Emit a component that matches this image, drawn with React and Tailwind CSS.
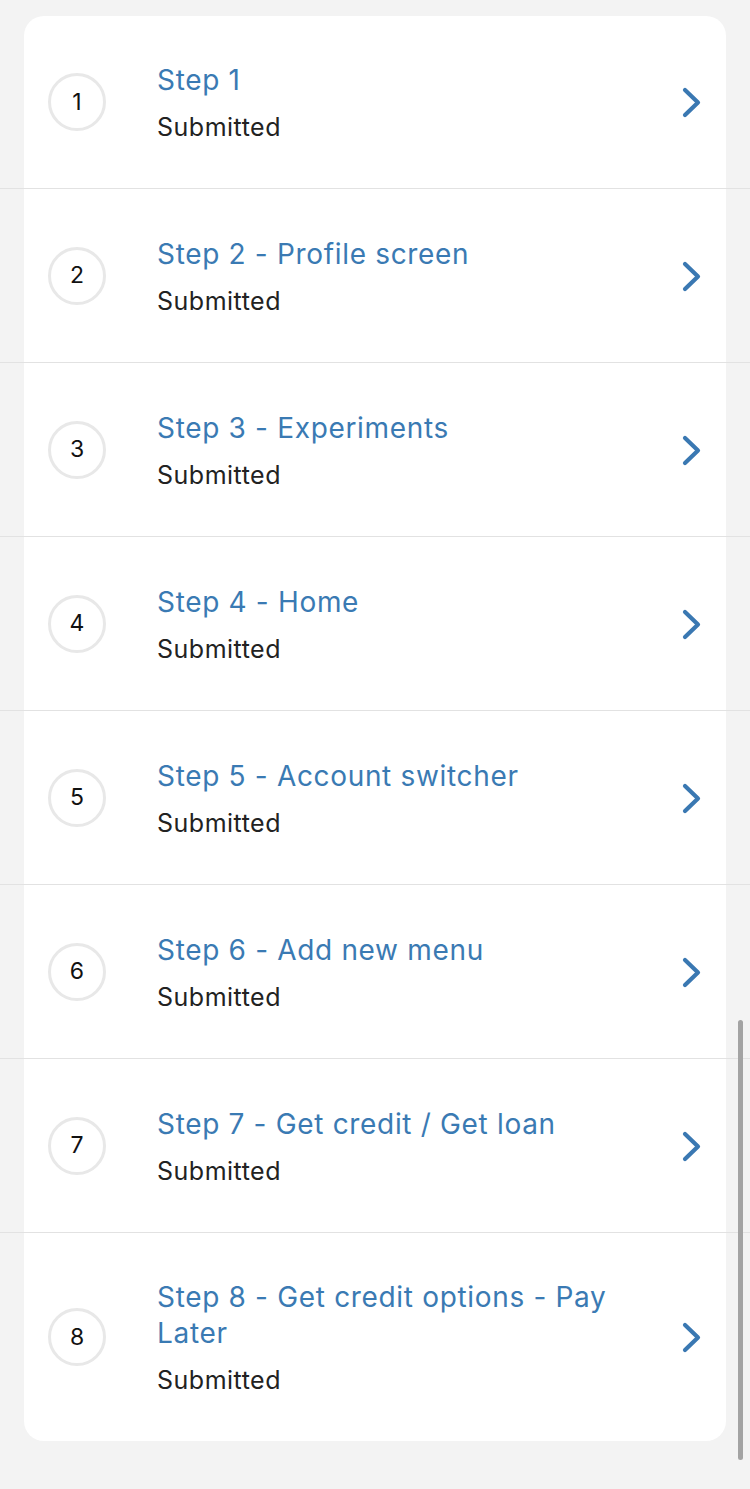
import React from "react";

const steps = [
  "Step 1",
  "Step 2 - Profile screen",
  "Step 3 - Experiments",
  "Step 4 - Home",
  "Step 5 - Account switcher",
  "Step 6 - Add new menu",
  "Step 7 - Get credit / Get loan",
  "Step 8 - Get credit options - Pay Later",
];

function Chevron() {
  return (
    <svg width="24" height="32" viewBox="0 0 24 32" className="shrink-0">
      <polyline
        points="5,4 18,16.5 5,29"
        fill="none"
        stroke="#3a78b2"
        strokeWidth="4.2"
        strokeLinecap="round"
        strokeLinejoin="round"
      />
    </svg>
  );
}

export default function App() {
  return (
    <div
      className="relative min-h-screen bg-[#f3f3f3] pt-[16px] pb-[47px] px-[24px]"
      style={{ fontFamily: "Inter, 'Liberation Sans', sans-serif" }}
    >
      <div className="bg-white rounded-[20px]">
        {steps.map((title, i) => (
          <div key={i}>
            {i > 0 && <div className="-mx-[24px] h-px bg-[#e2e2e2]" />}
            <div
              className={`flex items-center pl-[24px] pr-[22px] ${
                i === 0 ? "h-[172px]" : i === 7 ? "h-[208px]" : "h-[173px]"
              }`}
            >
              <div className="w-[58px] h-[58px] shrink-0 rounded-full border-[3px] border-[#e8e8e8] flex items-center justify-center text-[23px] text-[#111111]">
                {i + 1}
              </div>
              <div className="flex-1 ml-[51px] mr-[30px]">
                <div className="text-[28px] leading-[36px] tracking-[0.024em] text-[#3a7ab3] translate-y-px">
                  {title}
                </div>
                <div className="mt-[14px] text-[25px] leading-[32px] tracking-[0.02em] text-[#222222]">
                  Submitted
                </div>
              </div>
              <Chevron />
            </div>
          </div>
        ))}
      </div>
      <div className="absolute right-[7px] top-[1020px] h-[440px] w-[5px] rounded-full bg-[#a3a3a3]" />
    </div>
  );
}
